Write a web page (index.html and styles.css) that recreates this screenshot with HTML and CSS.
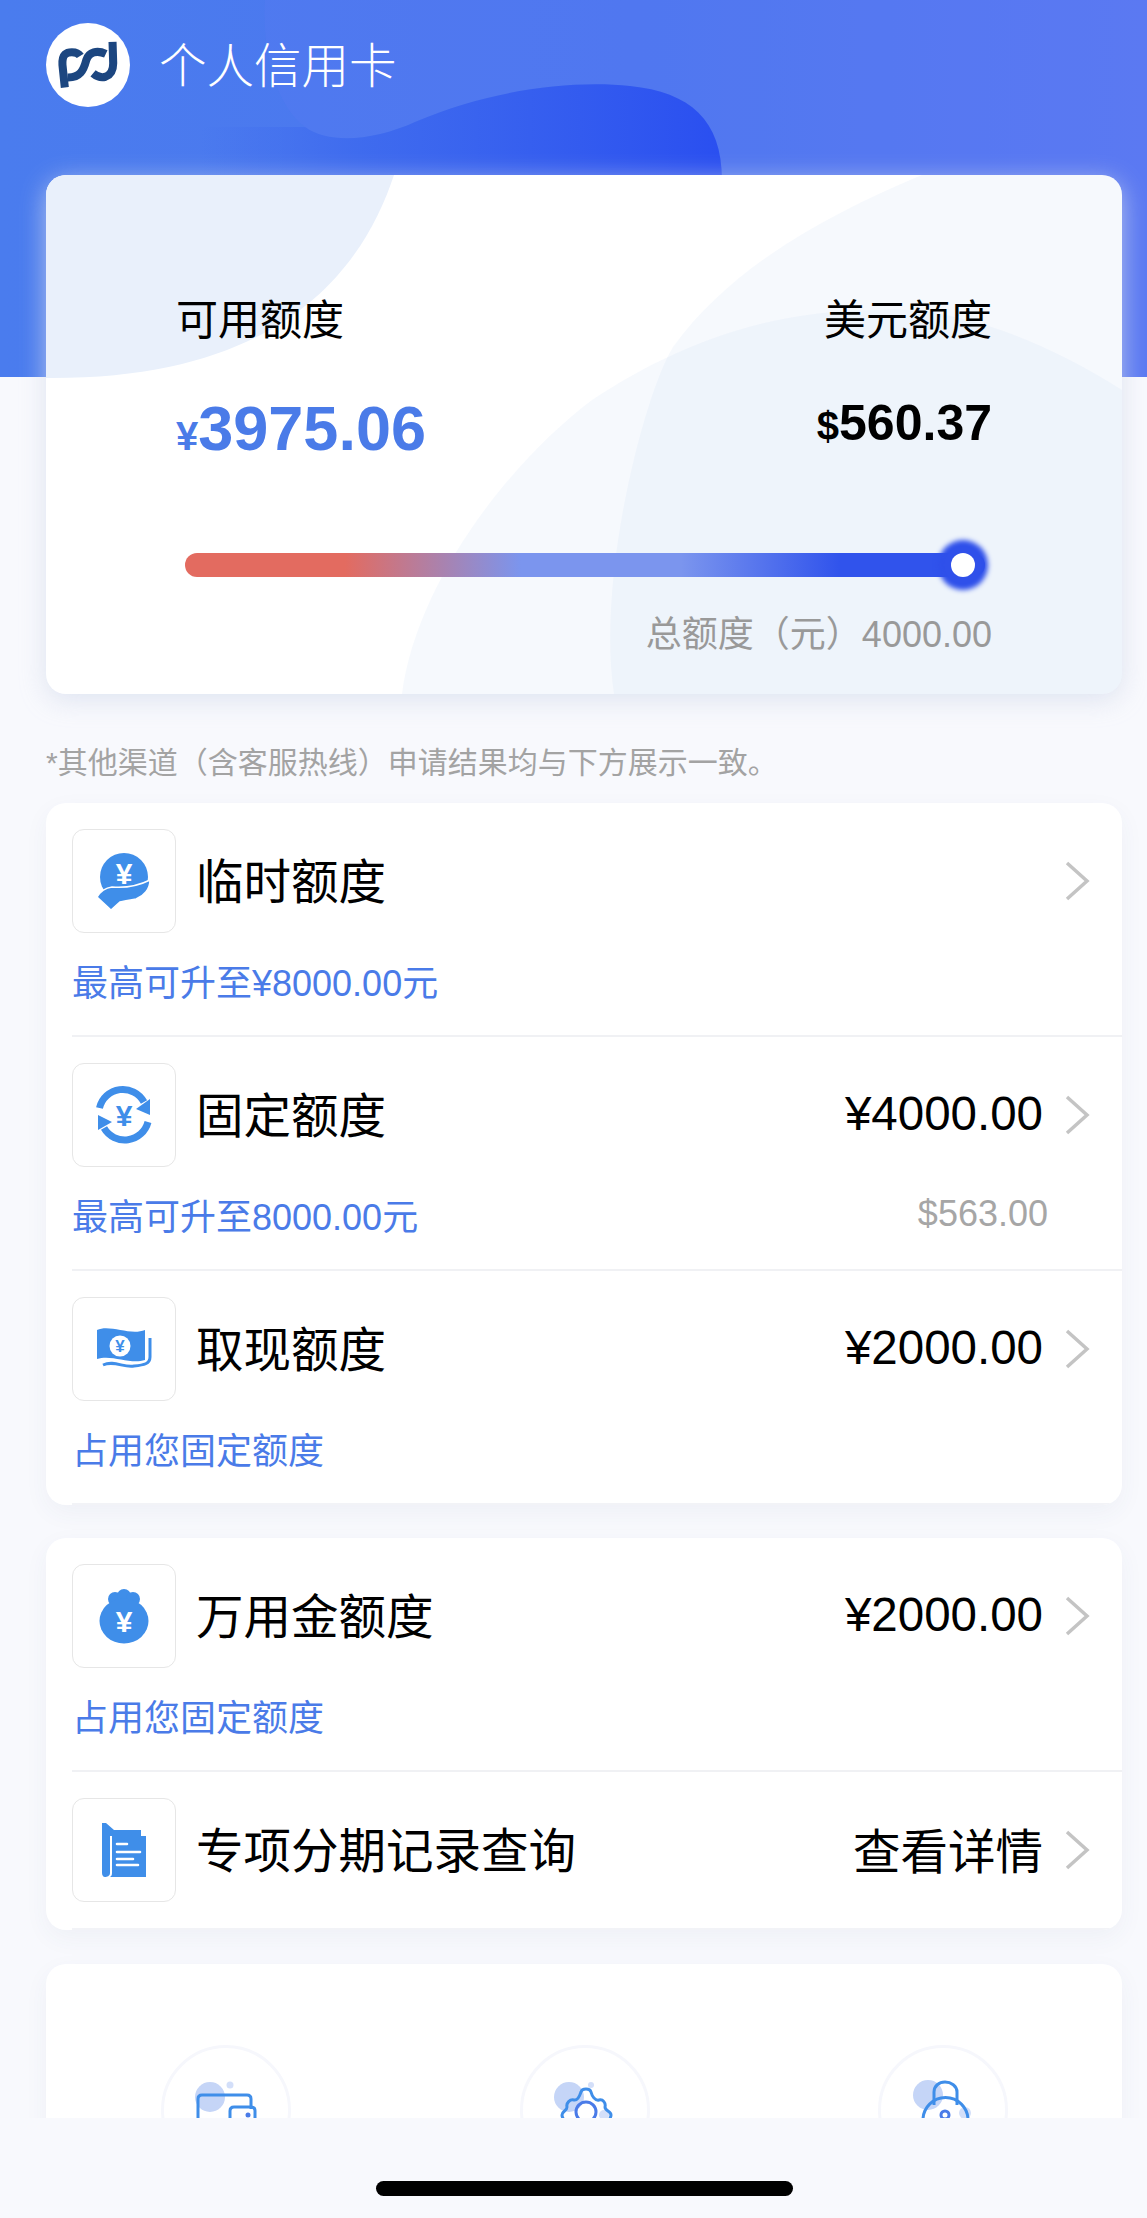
FILE: index.html
```html
<!DOCTYPE html>
<html lang="zh-CN">
<head>
    <meta charset="UTF-8">
    <meta name="viewport" content="width=device-width, initial-scale=1.0">
    <title>个人信用卡</title>
    <link rel="stylesheet" href="styles.css">
</head>
<body>

    <main class="page">
        <!-- 顶部蓝色背景 -->
        <div class="hero-bg">
            <svg class="hero-shape" viewBox="0 0 1147 377">
                <defs>
                    <linearGradient id="blobGrad" x1="0" y1="0" x2="1" y2="0">
                        <stop offset="0" stop-color="#3f6cee" stop-opacity="0"></stop>
                        <stop offset="0.3" stop-color="#3c68ee" stop-opacity="0.8"></stop>
                        <stop offset="1" stop-color="#2a4ff0"></stop>
                    </linearGradient>
                </defs>
                <path d="M265 0 C262 50 275 105 305 127 C330 145 375 140 415 122 C490 90 570 80 630 86 C690 92 722 120 722 180 L716 377 H1147 V0 Z" fill="#5a7bf2" opacity="0.3"></path>
                <path d="M305 127 C330 145 375 140 415 122 C490 90 570 80 630 86 C690 92 722 120 722 180 L716 200 H200 V127 Z" fill="url(#blobGrad)"></path>
            </svg>
        </div>

        <header class="title-bar">
            <span class="logo">
                <svg viewBox="48 40 250 250">
                    <g fill="none" stroke="#1c4680" stroke-width="24">
                        <path d="M104 232 L97 165 C95 132 110 127 125 127 C138 127 145 130 150 138"></path>
                        <path d="M226 132 C200 120 176 126 168 150 C160 180 150 203 112 202"></path>
                        <path d="M188 190 C200 200 214 203 225 200 C243 194 248 178 248 160 L246 96"></path>
                    </g>
                </svg>
            </span>
            <h1 class="title">个人信用卡</h1>
        </header>

        <!-- 额度卡片 -->
        <section class="quota-card">
            <div class="quota-clip">
                <svg class="quota-bg" viewBox="0 0 1076 519">
                    <path d="M0 0 H348 C318 90 240 205 0 203 Z" fill="#e9f0fb"></path>
                    <path d="M876 0 C780 40 685 92 627 172 C600 215 550 400 568 519 H1076 V0 Z" fill="#d0dff5" opacity="0.2"></path>
                    <path d="M1076 215 C990 160 900 130 832 135 C720 135 630 170 546 225 C460 290 370 410 356 519 H1076 Z" fill="#d0dff5" opacity="0.2"></path>
                </svg>
            </div>
            <div class="quota-top">
                <div class="quota-col">
                    <div class="quota-label">可用额度</div>
                    <div class="quota-amount"><span class="quota-cur">¥</span>3975.06</div>
                </div>
                <div class="quota-col quota-right">
                    <div class="quota-label">美元额度</div>
                    <div class="quota-usd"><span class="quota-cur">$</span>560.37</div>
                </div>
            </div>
            <div class="slider">
                <div class="slider-knob"></div>
            </div>
            <div class="quota-total">总额度（元）4000.00</div>
        </section>

        <p class="note">*其他渠道（含客服热线）申请结果均与下方展示一致。</p>

        <section class="list-card">
            <div class="row">
                <div class="row-main">
                    <span class="icon-box">
                        <svg viewBox="0 0 104 104" width="104" height="104">
                            <circle cx="52" cy="48" r="24" fill="#3f8ee9"></circle>
                            <text x="52" y="55" class="icon-yen" font-size="30">¥</text>
                            <path d="M25 68 C28 63 33 59 40 58 C52 59 66 57 78 51 C78 60 72 67 64 70 C58 71 52 72 48 73 L39 81 Z" fill="#3f8ee9" stroke="#fff" stroke-width="1.5"></path>
                        </svg>
                    </span>
                    <span class="row-title">临时额度</span>
                    <svg class="chevron" viewBox="0 0 26 42"><path d="M3 3 L23 21 L3 39"></path></svg>
                </div>
                <div class="row-sub"><span class="row-hint">最高可升至¥8000.00元</span></div>
            </div>
            <div class="row">
                <div class="row-main">
                    <span class="icon-box">
                        <svg viewBox="0 0 104 104" width="104" height="104">
                            <path d="M27.5 45 A24 24 0 0 1 72 39" fill="none" stroke="#3f8ee9" stroke-width="7"></path>
                            <path d="M64 46 L78 52 L78 36 Z" fill="#3f8ee9"></path>
                            <path d="M76 59 A24 24 0 0 1 32 65" fill="none" stroke="#3f8ee9" stroke-width="7"></path>
                            <path d="M26 52 L26 67 L40 59 Z" fill="#3f8ee9"></path>
                            <text x="52" y="63" class="icon-yen icon-yen-blue" font-size="30">¥</text>
                        </svg>
                    </span>
                    <span class="row-title">固定额度</span>
                    <span class="row-value">¥4000.00</span>
                    <svg class="chevron" viewBox="0 0 26 42"><path d="M3 3 L23 21 L3 39"></path></svg>
                </div>
                <div class="row-sub">
                    <span class="row-hint">最高可升至8000.00元</span>
                    <span class="row-usd">$563.00</span>
                </div>
            </div>
            <div class="row">
                <div class="row-main">
                    <span class="icon-box">
                        <svg viewBox="0 0 104 104" width="104" height="104">
                            <path d="M25 33 C38 27 58 39 73 33 V63 C58 68 40 57 25 62 Z" fill="#3f8ee9"></path>
                            <circle cx="48" cy="49" r="10.5" fill="#fff"></circle>
                            <text x="48" y="55" class="icon-yen icon-yen-blue" font-size="17">¥</text>
                            <path d="M31 68 C42 63 52 71 62 69 C72 68 78 67 78 60 V41" fill="none" stroke="#3f8ee9" stroke-width="3"></path>
                        </svg>
                    </span>
                    <span class="row-title">取现额度</span>
                    <span class="row-value">¥2000.00</span>
                    <svg class="chevron" viewBox="0 0 26 42"><path d="M3 3 L23 21 L3 39"></path></svg>
                </div>
                <div class="row-sub"><span class="row-hint">占用您固定额度</span></div>
            </div>
        </section>

        <section class="list-card list-card-next">
            <div class="row">
                <div class="row-main">
                    <span class="icon-box">
                        <svg viewBox="0 0 104 104" width="104" height="104">
                            <circle cx="43" cy="35" r="7" fill="#3f8ee9"></circle>
                            <circle cx="52" cy="32" r="7" fill="#3f8ee9"></circle>
                            <circle cx="61" cy="35" r="7" fill="#3f8ee9"></circle>
                            <ellipse cx="52" cy="57" rx="24.5" ry="22.5" fill="#3f8ee9"></ellipse>
                            <text x="52" y="68" class="icon-yen" font-size="30">¥</text>
                        </svg>
                    </span>
                    <span class="row-title">万用金额度</span>
                    <span class="row-value">¥2000.00</span>
                    <svg class="chevron" viewBox="0 0 26 42"><path d="M3 3 L23 21 L3 39"></path></svg>
                </div>
                <div class="row-sub"><span class="row-hint">占用您固定额度</span></div>
            </div>
            <div class="row row-short">
                <div class="row-main">
                    <span class="icon-box">
                        <svg viewBox="0 0 104 104" width="104" height="104">
                            <path d="M30 25 H34 L42 32 H69 V38 H38 V75 C38 78 35 79 33 79 C31 79 30 77 30 75 Z" fill="#3f8ee9"></path>
                            <path d="M40 38 H74 V79 H38 C40 78 40 76 40 74 Z" fill="#3f8ee9"></path>
                            <path d="M45 46 H55 M45 54 H68 M45 61 H61 M45 67 H66" stroke="#fff" stroke-width="2.6" stroke-linecap="round"></path>
                        </svg>
                    </span>
                    <span class="row-title">专项分期记录查询</span>
                    <span class="row-value">查看详情</span>
                    <svg class="chevron" viewBox="0 0 26 42"><path d="M3 3 L23 21 L3 39"></path></svg>
                </div>
            </div>
        </section>

        <!-- 底部功能入口，被底栏遮住一部分 -->
        <section class="tools-card">
            <div class="tool">
                <svg viewBox="0 0 130 130" width="130" height="130">
                    <circle cx="49" cy="52" r="15" fill="#c5d5f7"></circle>
                    <circle cx="69" cy="40" r="3.5" fill="#d3dff9"></circle>
                    <path d="M37 90 V54 C37 51 39 50 41 50 H86 C89 50 90 52 90 54 V64" fill="none" stroke="#3f8ee9" stroke-width="3"></path>
                    <path d="M69 90 V66 C69 63 71 62 73 62 H90 C93 62 94 64 94 66 V90" fill="none" stroke="#3f8ee9" stroke-width="3"></path>
                    <circle cx="87" cy="70" r="2.5" fill="#4a7be8"></circle>
                </svg>
            </div>
            <div class="tool">
                <svg viewBox="0 0 130 130" width="130" height="130">
                    <circle cx="49" cy="52" r="15" fill="#c5d5f7"></circle>
                    <circle cx="71" cy="40" r="3" fill="#d3dff9"></circle>
                    <circle cx="84" cy="70" r="5" fill="#d3dff9"></circle>
                    <path d="M46 82 C46 76 42 74 42 70 C42 66 47 66 47 62 C46 58 50 54 54 55 C58 56 60 50 61 47 C62 43 70 43 71 47 C72 51 75 56 79 55 C83 54 86 58 85 62 C85 66 91 66 91 70 C91 74 87 76 87 82" fill="none" stroke="#3f8ee9" stroke-width="3" stroke-linejoin="round"></path>
                    <circle cx="66" cy="67" r="10" fill="none" stroke="#4a7be8" stroke-width="3"></circle>
                </svg>
            </div>
            <div class="tool">
                <svg viewBox="0 0 130 130" width="130" height="130">
                    <circle cx="50" cy="50" r="15" fill="#c5d5f7"></circle>
                    <circle cx="87" cy="68" r="6" fill="#d3dff9"></circle>
                    <path d="M56 60 V47 C56 41 61 37 67 37 C73 37 79 41 79 47 V60" fill="none" stroke="#3f8ee9" stroke-width="3"></path>
                    <circle cx="67.5" cy="75" r="22.5" fill="none" stroke="#3f8ee9" stroke-width="3"></circle>
                    <circle cx="67" cy="70" r="4" fill="none" stroke="#4a7be8" stroke-width="3"></circle>
                </svg>
            </div>
        </section>
    </main>

    <footer class="home-bar">
        <div class="home-indicator"></div>
    </footer>

</body>
</html>
```

FILE: styles.css
```css
* {
    box-sizing: border-box;
}

html, body {
    margin: 0;
    padding: 0;
}

body {
    width: 1147px;
    height: 2218px;
    overflow: hidden;
    background-color: #f8f9fd;
    font-family: "Liberation Sans", "Noto Sans CJK SC", sans-serif;
    color: #000;
}

.page {
    position: relative;
    height: 2118px;
    padding: 23px 25px 0 46px;
    overflow: hidden;
}

.hero-bg {
    position: absolute;
    top: 0;
    left: 0;
    width: 100%;
    height: 377px;
    background: linear-gradient(90deg, #4a7cee 0%, #4c76ef 55%, #5c79f3 100%);
}

.hero-shape {
    display: block;
    width: 100%;
    height: 100%;
}

.title-bar {
    position: relative;
    display: flex;
    align-items: center;
    height: 84px;
}

.logo {
    display: flex;
    width: 84px;
    height: 84px;
    border-radius: 50%;
    background-color: #fff;
}

.logo svg {
    width: 84px;
    height: 84px;
}

.title {
    margin: 0 0 6px 29px;
    font-size: 47.5px;
    font-weight: 300;
    color: #fff;
}

.quota-card {
    position: relative;
    height: 519px;
    margin-top: 68px;
    padding: 121px 130px 0;
    border-radius: 20px;
    background-color: #fff;
    box-shadow: 0 6px 26px rgba(214, 220, 236, 0.75);
}

.quota-clip {
    position: absolute;
    top: 0;
    left: 0;
    width: 100%;
    height: 100%;
    border-radius: 20px;
    overflow: hidden;
}

.quota-bg {
    display: block;
    width: 100%;
    height: 100%;
}

.quota-top {
    position: relative;
    display: flex;
    justify-content: space-between;
}

.quota-right {
    text-align: right;
}

.quota-label {
    font-size: 42px;
    line-height: 50px;
}

.quota-amount {
    margin-top: 46px;
    font-size: 63px;
    line-height: 72px;
    font-weight: bold;
    color: #4a7be8;
}

.quota-usd {
    margin-top: 47px;
    font-size: 50px;
    line-height: 60px;
    font-weight: bold;
}

.quota-cur {
    font-size: 40px;
}

.slider {
    position: relative;
    width: 800px;
    height: 24px;
    margin: 81px 0 0 9px;
    border-radius: 12px;
    background: linear-gradient(90deg, #e36b60 0%, #e36b60 20%, #7b95ee 42%, #7b95ee 62%, #3053ec 82%, #3053ec 100%);
}

.slider-knob {
    position: absolute;
    top: 0;
    right: 10px;
    width: 24px;
    height: 24px;
    border-radius: 50%;
    background-color: #fff;
    box-shadow: 0 0 5px 13px #2f50ea;
}

.quota-total {
    position: relative;
    margin-top: 36px;
    font-size: 36px;
    line-height: 44px;
    text-align: right;
    color: #999;
}

.note {
    margin: 51px 0 0;
    font-size: 30px;
    line-height: 36px;
    color: #a3a3a3;
}

.list-card {
    margin-top: 22px;
    padding-top: 26px;
    border-radius: 20px;
    background-color: #fff;
    box-shadow: 0 8px 24px rgba(60, 70, 110, 0.05);
    overflow: hidden;
}

.list-card-next {
    margin-top: 33px;
}

.row {
    margin-left: 26px;
    padding-bottom: 33px;
    border-bottom: 2px solid #f0f1f4;
}

.row + .row {
    padding-top: 26px;
}

.row:last-child {
    border-bottom-color: #f2f3f7;
}

.row-short {
    padding-bottom: 26px;
}

.row-main {
    display: flex;
    align-items: center;
    height: 104px;
    padding-right: 32px;
}

.icon-box {
    flex: none;
    width: 104px;
    height: 104px;
    border: 1px solid #e6e6e6;
    border-radius: 12px;
    background-color: #fff;
    overflow: hidden;
}

.icon-box svg {
    display: block;
    margin: -1px;
}

.icon-yen {
    fill: #fff;
    font-family: "Liberation Sans", sans-serif;
    font-weight: bold;
    text-anchor: middle;
}

.icon-yen-blue {
    fill: #3f8ee9;
}

.row-title {
    margin: 0 0 6px 20px;
    font-size: 47.5px;
}

.row-value {
    margin: 0 0 3px auto;
    font-size: 47.5px;
}

.chevron {
    flex: none;
    width: 26px;
    height: 42px;
    margin-left: 21px;
    fill: none;
    stroke: #c4c4c4;
    stroke-width: 3.5;
}

.row-title + .chevron {
    margin-left: auto;
}

.row-sub {
    display: flex;
    justify-content: space-between;
    align-items: center;
    height: 44px;
    margin-top: 25px;
    padding-right: 74px;
    font-size: 36px;
}

.row-hint {
    color: #4a7be8;
}

.row-usd {
    color: #a6a6a6;
}

.tools-card {
    display: flex;
    justify-content: space-between;
    height: 300px;
    margin-top: 34px;
    padding: 81px 114px 0 115px;
    border-radius: 20px;
    background-color: #fff;
    box-shadow: 0 8px 24px rgba(60, 70, 110, 0.05);
}

.tool {
    width: 130px;
    height: 130px;
    border: 3px solid #f6f7fc;
    border-radius: 50%;
}

.tool svg {
    display: block;
    margin: -3px;
}

.home-bar {
    height: 100px;
    padding: 63px 0 0 376px;
    background-color: #f8f9fd;
}

.home-indicator {
    width: 417px;
    height: 15px;
    border-radius: 8px;
    background-color: #000;
}
```
